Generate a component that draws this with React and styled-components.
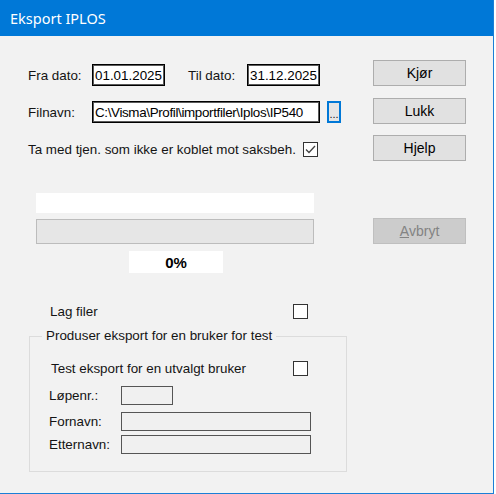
import React from 'react';
import styled, { createGlobalStyle } from 'styled-components';

const Global = createGlobalStyle`
  html, body { margin: 0; padding: 0; background: #ffffff; }
  * { box-sizing: border-box; }
`;

const Window = styled.div`
  width: 494px;
  height: 494px;
  background: #f2f2f2;
  border-right: 1px solid #1b7fd6;
  border-bottom: 1px solid #1b7fd6;
  display: flex;
  flex-direction: column;
  font-family: "Liberation Sans", Arial, sans-serif;
  font-size: 13.4px;
  color: #141414;
`;

const TitleBar = styled.div`
  height: 36px;
  flex: none;
  background: #0078d7;
  color: #fff;
  font-family: "Noto Sans", "Open Sans", sans-serif;
  font-size: 14.5px;
  display: flex;
  align-items: center;
  padding-left: 10px;
`;

const Body = styled.div`
  display: flex;
  padding-left: 28px;
`;

const Left = styled.div`
  width: 345px;
  display: flex;
  flex-direction: column;
`;

const Right = styled.div`
  display: flex;
  flex-direction: column;
  padding-top: 24px;
`;

const Row = styled.div`
  display: flex;
  align-items: center;
  height: ${p => p.h || 22}px;
  width: ${p => (p.w ? p.w + 'px' : 'auto')};
  margin-top: ${p => p.top || 0}px;
  padding-left: ${p => p.indent || 0}px;
`;

const Label = styled.span`
  width: ${p => (p.w ? p.w + 'px' : 'auto')};
  flex: none;
  white-space: nowrap;
`;

const TextBox = styled.div`
  width: ${p => p.w}px;
  height: 22px;
  background: #fff;
  border: 1px solid #000;
  box-shadow: inset 0 0 0 1px #5a5a5a;
  padding: 0 2px;
  display: flex;
  align-items: center;
  white-space: nowrap;
  overflow: hidden;
  color: #000;
  font-size: 13.4px;
  letter-spacing: ${p => p.tight ? '-0.35px' : '0'};
  margin-right: ${p => p.gap || 0}px;
`;

const Browse = styled.div`
  width: 14px;
  height: 22px;
  margin-left: 7px;
  border: 2px solid #0078d7;
  background: #e5e5e5;
  display: flex;
  align-items: flex-end;
  justify-content: center;
  font-size: 11px;
  line-height: 14px;
`;

const Check = styled.div`
  width: 15px;
  height: 15px;
  flex: none;
  margin-left: auto;
  border: 1px solid #333;
  background: #fff;
  display: flex;
  align-items: center;
  justify-content: center;
`;

const WhiteBar = styled.div`
  margin: 36px 0 0 8px;
  width: 278px;
  height: 20px;
  background: #fff;
`;

const Progress = styled.div`
  margin: 6px 0 0 8px;
  width: 278px;
  height: 25px;
  background: #e6e6e6;
  border: 1px solid #bcbcbc;
`;

const Percent = styled.div`
  margin: 7px 0 0 101px;
  width: 94px;
  height: 22px;
  background: #fff;
  display: flex;
  align-items: center;
  justify-content: center;
  font-weight: bold;
  font-size: 15px;
  color: #000;
`;

const Group = styled.fieldset`
  margin: 9px 0 0 1px;
  width: 318px;
  min-width: 0;
  height: 144px;
  border: 1px solid #dcdcdc;
  padding: 0 38px 0 19px;
`;

const Legend = styled.legend`
  margin-left: -7px;
  padding: 0 4px;
  line-height: 16px;
`;

const SmallBox = styled.div`
  width: ${p => p.w}px;
  height: 19px;
  border: 1px solid #555;
  background: #f0f0f0;
  flex: none;
`;

const Button = styled.div`
  width: 93px;
  height: 26px;
  margin-top: ${p => p.top || 0}px;
  background: ${p => (p.disabled ? '#cccccc' : '#e1e1e1')};
  border: 1px solid ${p => (p.disabled ? '#bfbfbf' : '#adadad')};
  color: ${p => (p.disabled ? '#838383' : '#000')};
  display: flex;
  align-items: center;
  justify-content: center;
  font-size: 14px;
  u { text-decoration: underline; }
`;

const Tick = () => (
  <svg width="13" height="13" viewBox="0 0 13 13">
    <polyline points="2,6.5 5,9.5 11,3" fill="none" stroke="#444" strokeWidth="1.3" />
  </svg>
);

export default function App() {
  return (
    <>
      <Global />
      <Window>
        <TitleBar>Eksport IPLOS</TitleBar>
        <Body>
          <Left>
            <Row top={28}>
              <Label w={64}>Fra dato:</Label>
              <TextBox w={73} gap={23}>01.01.2025</TextBox>
              <Label w={59}>Til dato:</Label>
              <TextBox w={73}>31.12.2025</TextBox>
            </Row>
            <Row top={15}>
              <Label w={64}>Filnavn:</Label>
              <TextBox w={228} tight>C:\Visma\Profil\importfiler\Iplos\IP540</TextBox>
              <Browse>...</Browse>
            </Row>
            <Row top={19} h={15} w={290}>
              <Label>Ta med tjen. som ikke er koblet mot saksbeh.</Label>
              <Check><Tick /></Check>
            </Row>
            <WhiteBar />
            <Progress />
            <Percent>0%</Percent>
            <Row top={30} h={16} indent={22} w={280}>
              <Label>Lag filer</Label>
              <Check />
            </Row>
            <Group>
              <Legend>Produser eksport for en bruker for test</Legend>
              <Row top={17} h={15} indent={2}>
                <Label>Test eksport for en utvalgt bruker</Label>
                <Check />
              </Row>
              <Row top={10} h={19}>
                <Label w={72}>Løpenr.:</Label>
                <SmallBox w={52} />
              </Row>
              <Row top={7} h={19}>
                <Label w={72}>Fornavn:</Label>
                <SmallBox w={190} />
              </Row>
              <Row top={4} h={19}>
                <Label w={72}>Etternavn:</Label>
                <SmallBox w={190} />
              </Row>
            </Group>
          </Left>
          <Right>
            <Button>Kjør</Button>
            <Button top={12}>Lukk</Button>
            <Button top={11}>Hjelp</Button>
            <Button top={57} disabled><u>A</u>vbryt</Button>
          </Right>
        </Body>
      </Window>
    </>
  );
}
